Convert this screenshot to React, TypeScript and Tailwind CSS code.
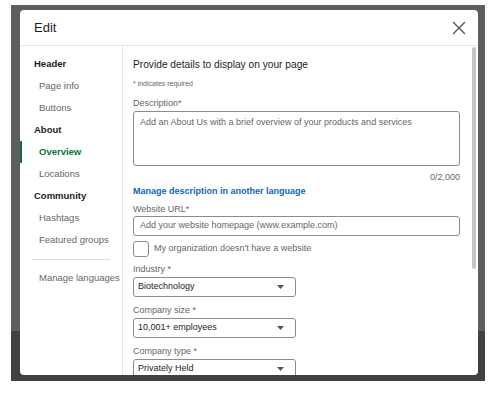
import React from "react";

const font = { fontFamily: '"Liberation Sans", Arial, sans-serif' };

function Caret() {
  return (
    <svg width="9" height="6" viewBox="0 0 9 6" className="shrink-0">
      <path d="M1 1 L8 1 L4.5 5 Z" fill="#555" />
    </svg>
  );
}

function Select({ value }: { value: string }) {
  return (
    <div className="mt-[2px] flex h-[20px] w-[163px] items-center justify-between rounded-[3px] border border-[#8c8c8c] pl-[4px] pr-[10px]">
      <span className="text-[9px] text-[#1d1d1d]">{value}</span>
      <Caret />
    </div>
  );
}

function Label({ children, className = "" }: { children: React.ReactNode; className?: string }) {
  return <div className={`text-[9px] leading-[12px] text-[#666] ${className}`}>{children}</div>;
}

export default function App() {
  const navItem = "flex h-[22px] items-center pl-[19px] text-[9.5px] text-[#666]";
  const navHead = "flex h-[22px] items-center pl-[14px] text-[9.5px] font-bold text-[#1d1d1d]";
  return (
    <div className="h-[394px] w-[494px] bg-white pt-[5px] pl-[11px]" style={font}>
      <div className="flex h-[376px] w-[474px] flex-col bg-[linear-gradient(to_bottom,#5e5e5e_0px,#5e5e5e_326px,#42413d_326px)]">
        <div className="flex flex-1 flex-col pt-[5px] pl-[9px]">
          <div className="flex h-[365px] w-[458px] flex-col overflow-hidden rounded-[4px] bg-white">
            <div className="flex h-[36px] shrink-0 items-center justify-between border-b border-[#e6e6e6] pl-[14px] pr-[12px]">
              <span className="text-[13px] text-[#1d1d1d]">Edit</span>
              <svg width="14" height="14" viewBox="0 0 14 14">
                <path d="M1.5 1.5 L12.5 12.5 M12.5 1.5 L1.5 12.5" stroke="#555" strokeWidth="1.4" strokeLinecap="round" />
              </svg>
            </div>
            <div className="flex min-h-0 flex-1">
              <div className="w-[103px] shrink-0 border-r border-[#e6e6e6] pt-[7px]">
                <div className={navHead}>Header</div>
                <div className={navItem}>Page info</div>
                <div className={navItem}>Buttons</div>
                <div className={navHead}>About</div>
                <div className="flex h-[22px] items-center border-l-[2px] border-[#057642] pl-[17px] text-[9.5px] font-bold text-[#057642]">
                  Overview
                </div>
                <div className={navItem}>Locations</div>
                <div className={navHead}>Community</div>
                <div className={navItem}>Hashtags</div>
                <div className={navItem}>Featured groups</div>
                <div className="mx-[12px] mt-[8px] border-t border-[#dcdcdc]" />
                <div className={`${navItem} mt-[7px]`}>Manage languages</div>
              </div>
              <div className="relative min-w-0 flex-1 overflow-hidden pt-[12px] pl-[10px] pr-[18px]">
                <div className="text-[10.2px] leading-[14px] text-[#1d1d1d]">Provide details to display on your page</div>
                <div className="mt-[7px] text-[7px] leading-[10px] text-[#666]">* indicates required</div>
                <Label className="mt-[8px]">Description*</Label>
                <div className="mt-[2px] h-[55px] rounded-[3px] border border-[#8c8c8c] px-[6px] pt-[4px] text-[9px] leading-[12px] text-[#666]">
                  Add an About Us with a brief overview of your products and services
                </div>
                <Label className="mt-[5px] text-right">0/2,000</Label>
                <div className="mt-[2px] text-[9px] font-bold leading-[12px] text-[#0a66c2]">Manage description in another language</div>
                <Label className="mt-[6px]">Website URL*</Label>
                <div className="mt-[1px] flex h-[20px] items-center rounded-[3px] border border-[#8c8c8c] px-[6px] text-[9px] text-[#666]">
                  Add your website homepage (www.example.com)
                </div>
                <div className="mt-[5px] flex h-[16px] items-center gap-[5px]">
                  <div className="h-[16px] w-[16px] rounded-[3px] border border-[#8c8c8c]" />
                  <span className="text-[9px] text-[#666]">My organization doesn't have a website</span>
                </div>
                <Label className="mt-[6px]">Industry *</Label>
                <Select value="Biotechnology" />
                <Label className="mt-[7px]">Company size *</Label>
                <Select value="10,001+ employees" />
                <Label className="mt-[7px]">Company type *</Label>
                <Select value="Privately Held" />
                <div className="absolute top-[1px] right-[2px] h-[222px] w-[4px] rounded-full bg-[#c4c4c4]" />
              </div>
            </div>
          </div>
        </div>
        <div className="h-[6px]" />
      </div>
    </div>
  );
}
